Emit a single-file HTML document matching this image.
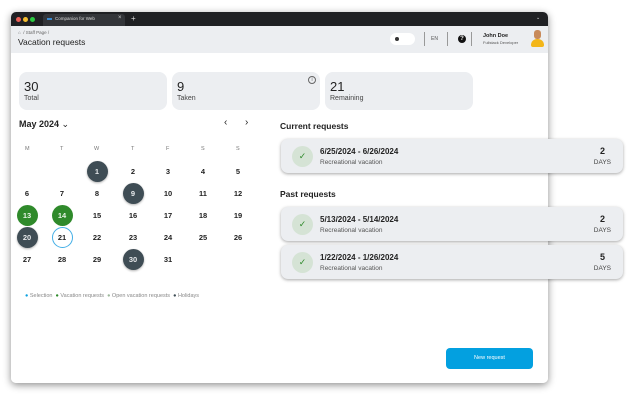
<!DOCTYPE html>
<html><head><meta charset="utf-8"><style>
*{margin:0;padding:0;box-sizing:border-box}
body{width:631px;height:400px;background:#fff;font-family:"Liberation Sans",sans-serif;position:relative;overflow:hidden;color:#222}
.a{position:absolute}
.win{left:11px;top:12px;width:537px;height:371px;background:#fff;border-radius:5px;box-shadow:0 2px 8px rgba(0,0,0,.45);overflow:hidden}
.card{background:#eceef1;border-radius:8px}
.day{position:absolute;width:21px;height:21px;margin-left:-10.5px;margin-top:-10.5px;line-height:21px;text-align:center;font-size:7.5px;font-weight:bold;border-radius:50%}
.hol{background:#3f4d55;color:#e6e9eb;box-shadow:0 1px 2px rgba(0,0,0,.3)}
.vac{background:#2f8a2b;color:#e8f3e6}
.req{position:absolute;left:281px;width:342px;height:34px;background:#eceef1;border-radius:7px;box-shadow:0 1px 3px rgba(0,0,0,.35)}
.req .ck{position:absolute;left:11px;top:7px;width:21px;height:21px;border-radius:50%;background:#d5e3d5;color:#2f8a2b;font-size:9px;line-height:21px;text-align:center}
.req .d{position:absolute;left:39px;top:8px;font-size:8px;font-weight:bold}
.req .s{position:absolute;left:39px;top:20px;font-size:6.5px;color:#555}
.req .n{position:absolute;right:18px;top:7px;font-size:9px;font-weight:bold}
.req .u{position:absolute;right:12px;top:20px;font-size:6.5px;color:#444}
</style></head><body>
<div class="a win">
 <div class="a" style="left:0;top:0;width:537px;height:14px;background:#1f2023"></div>
 <div class="a" style="left:5px;top:5px;width:5px;height:5px;border-radius:50%;background:#ec5f57"></div>
 <div class="a" style="left:12px;top:5px;width:5px;height:5px;border-radius:50%;background:#f4bd2e"></div>
 <div class="a" style="left:19px;top:5px;width:5px;height:5px;border-radius:50%;background:#29c940"></div>
 <div class="a" style="left:32px;top:2px;width:82px;height:12px;background:#333539;border-radius:3px 3px 0 0"></div>
 <div class="a" style="left:36px;top:6px;width:5px;height:2px;background:#3a8ad0"></div>
 <div class="a" style="left:44px;top:4px;font-size:4.5px;color:#ddd">Companion for Web</div>
 <div class="a" style="left:107px;top:3px;font-size:6px;color:#ccc">×</div>
 <div class="a" style="left:120px;top:2px;font-size:8px;color:#ddd">+</div>
 <div class="a" style="left:525px;top:3px;font-size:5px;color:#ddd">⌄</div>
 <div class="a" style="left:0;top:14px;width:537px;height:27px;background:#eceef1"></div>
 <div class="a" style="left:7px;top:18px;font-size:4.5px;color:#666">⌂ &nbsp;/ Staff Page /</div>
 <div class="a" style="left:7px;top:25px;font-size:8.5px;color:#222">Vacation requests</div>
 <div class="a" style="left:379px;top:21px;width:25px;height:12px;background:#fff;border-radius:6px"></div>
 <div class="a" style="left:384px;top:25px;width:4px;height:4px;background:#333;border-radius:50%"></div>
 <div class="a" style="left:413px;top:20px;width:1px;height:14px;background:#999"></div>
 <div class="a" style="left:420px;top:24px;font-size:5px;color:#555">EN</div>
 <div class="a" style="left:436px;top:20px;width:1px;height:14px;background:#999"></div>
 <div class="a" style="left:447px;top:23px;width:8px;height:8px;background:#111;border-radius:50%;color:#fff;font-size:6px;line-height:8px;text-align:center;font-weight:bold">?</div>
 <div class="a" style="left:460px;top:20px;width:1px;height:14px;background:#999"></div>
 <div class="a" style="left:472px;top:21px;font-size:5.5px;font-weight:bold">John Doe</div>
 <div class="a" style="left:472px;top:28px;font-size:4px;color:#555">Fullstack Developer</div>
 <div class="a" style="left:520px;top:27px;width:13px;height:8px;background:#f3b619;border-radius:6px 6px 2px 2px"></div>
 <div class="a" style="left:523px;top:18px;width:7px;height:9px;background:#c88a5a;border-radius:3px"></div>
 <div class="a" style="left:0;top:41px;width:537px;height:330px;background:#fff;border-radius:6px 6px 0 0"></div>
</div>
<div class="a card" style="left:19px;top:72px;width:148px;height:38px"></div>
<div class="a card" style="left:172px;top:72px;width:148px;height:38px"></div>
<div class="a card" style="left:325px;top:72px;width:148px;height:38px"></div>
<div class="a" style="left:24px;top:79px;font-size:13px">30</div><div class="a" style="left:24px;top:95px;font-size:7px;color:#444">Total</div>
<div class="a" style="left:177px;top:79px;font-size:13px">9</div><div class="a" style="left:177px;top:95px;font-size:7px;color:#444">Taken</div>
<div class="a" style="left:330px;top:79px;font-size:13px">21</div><div class="a" style="left:330px;top:95px;font-size:7px;color:#444">Remaining</div>
<div class="a" style="left:308px;top:76px;width:8px;height:8px;border:1px solid #666;border-radius:50%;font-size:5px;line-height:6px;text-align:center;color:#666">i</div>
<div class="a" style="left:19px;top:119px;font-size:9px;font-weight:bold">May 2024 <span style="font-weight:normal">⌄</span></div>
<div class="a" style="left:224px;top:117px;font-size:10px">‹</div>
<div class="a" style="left:245px;top:117px;font-size:10px">›</div>
<div style="font-size:5.5px;color:#777">
<div class="a" style="left:25px;top:146px">M</div><div class="a" style="left:60px;top:146px">T</div><div class="a" style="left:94px;top:146px">W</div><div class="a" style="left:131px;top:146px">T</div><div class="a" style="left:166px;top:146px">F</div><div class="a" style="left:201px;top:146px">S</div><div class="a" style="left:236px;top:146px">S</div>
</div>
<div class="day hol" style="left:97px;top:171px">1</div><div class="day" style="left:133px;top:171px">2</div><div class="day" style="left:168px;top:171px">3</div><div class="day" style="left:203px;top:171px">4</div><div class="day" style="left:238px;top:171px">5</div>
<div class="day" style="left:27px;top:193px">6</div><div class="day" style="left:62px;top:193px">7</div><div class="day" style="left:97px;top:193px">8</div><div class="day hol" style="left:133px;top:193px">9</div><div class="day" style="left:168px;top:193px">10</div><div class="day" style="left:203px;top:193px">11</div><div class="day" style="left:238px;top:193px">12</div>
<div class="day vac" style="left:27px;top:215px">13</div><div class="day vac" style="left:62px;top:215px">14</div><div class="day" style="left:97px;top:215px">15</div><div class="day" style="left:133px;top:215px">16</div><div class="day" style="left:168px;top:215px">17</div><div class="day" style="left:203px;top:215px">18</div><div class="day" style="left:238px;top:215px">19</div>
<div class="day hol" style="left:27px;top:237px">20</div><div class="day" style="left:62px;top:237px;border:1px solid #42aee6;line-height:19px">21</div><div class="day" style="left:97px;top:237px">22</div><div class="day" style="left:133px;top:237px">23</div><div class="day" style="left:168px;top:237px">24</div><div class="day" style="left:203px;top:237px">25</div><div class="day" style="left:238px;top:237px">26</div>
<div class="day" style="left:27px;top:259px">27</div><div class="day" style="left:62px;top:259px">28</div><div class="day" style="left:97px;top:259px">29</div><div class="day hol" style="left:133px;top:259px">30</div><div class="day" style="left:168px;top:259px">31</div>
<div class="a" style="left:25px;top:293px;font-size:5.5px;color:#888;white-space:nowrap"><span style="color:#0aa0e0">●</span> Selection &nbsp;<span style="color:#2f8a2b">●</span> Vacation requests &nbsp;<span style="color:#9db89b">●</span> Open vacation requests &nbsp;<span style="color:#3f4d55">●</span> Holidays</div>
<div class="a" style="left:280px;top:121px;font-size:8.5px;font-weight:bold">Current requests</div>
<div class="a" style="left:280px;top:189px;font-size:8.5px;font-weight:bold">Past requests</div>
<div class="req" style="top:139px"><div class="ck">✓</div><div class="d">6/25/2024 - 6/26/2024</div><div class="s">Recreational vacation</div><div class="n">2</div><div class="u">DAYS</div></div>
<div class="req" style="top:207px"><div class="ck">✓</div><div class="d">5/13/2024 - 5/14/2024</div><div class="s">Recreational vacation</div><div class="n">2</div><div class="u">DAYS</div></div>
<div class="req" style="top:245px"><div class="ck">✓</div><div class="d">1/22/2024 - 1/26/2024</div><div class="s">Recreational vacation</div><div class="n">5</div><div class="u">DAYS</div></div>
<div class="a" style="left:446px;top:348px;width:87px;height:21px;background:#03a0e0;border-radius:4px;color:#fff;font-size:5.5px;text-align:center;line-height:21px">New request</div>
</body></html>
